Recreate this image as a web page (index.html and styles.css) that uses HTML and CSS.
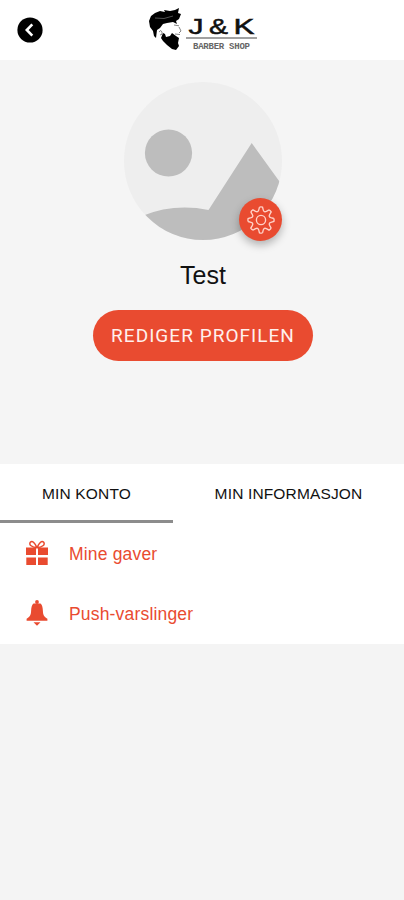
FILE: index.html
```
<!DOCTYPE html>
<html lang="nb">
<head>
<meta charset="utf-8">
<title>J&amp;K Barber Shop</title>
<link rel="stylesheet" href="styles.css">
</head>
<body>
<header class="topbar">
  <button class="back" aria-label="Tilbake">
    <svg viewBox="0 0 26 26" width="26" height="26"><circle cx="13" cy="13" r="12.6"/><path d="M15.3 7.3 9.8 13l5.5 5.7" fill="none" stroke="#fff" stroke-width="2.6"/></svg>
  </button>
  <svg class="logo" viewBox="0 0 112 46" width="112" height="46">
    <path d="M3 20 2 14 4 9 8 6 13 4 18 5 17 3 23 4 28 3 32 1 31 6 34 7 32 12 29 14 30 17 26 15 20 16 16 17 13 21 10 23 9 31 7 29 6 24Z"/>
    <path d="M16 26 18 27 19 30 23 29 25 26 29 29 32 31 31 36 32 39 29 43 25 42 20 38 16 34 14 31Z"/>
    <path d="M8 11Q17 13 26 9" fill="none" stroke="#888" stroke-width=".6"/>
    <path d="M27 18l5 .8M32 20l2 4-2 2M28 27l5 .5M12 25q2-3 3 0t-2 3" fill="none" stroke="#666" stroke-width=".8"/>
    <g class="logo-name">
      <text x="41.5" y="26.5" textLength="15" lengthAdjust="spacingAndGlyphs">J</text>
      <text x="62" y="26.5" textLength="19" lengthAdjust="spacingAndGlyphs">&amp;</text>
      <text x="86.5" y="26.5" textLength="21" lengthAdjust="spacingAndGlyphs">K</text>
    </g>
    <path d="M39 31H110" stroke="#444" stroke-width="1.2"/>
    <text class="logo-sub" x="46" y="41.5" textLength="57">BARBER SHOP</text>
  </svg>
</header>
<main>
  <section class="profile">
    <div class="avatar">
      <svg viewBox="0 0 158 158" width="158" height="158">
        <clipPath id="round"><circle cx="79" cy="79" r="79"/></clipPath>
        <g clip-path="url(#round)">
          <path fill="#eee" d="M0 0h158v158H0z"/>
          <circle cx="44.5" cy="71" r="23.6" fill="#bdbdbd"/>
          <path fill="#bdbdbd" d="M18 134Q50 121 84.5 128L127.7 61 158 103V158H18Z"/>
        </g>
      </svg>
      <button class="settings" aria-label="Innstillinger">
        <svg viewBox="-15 -15 30 30" width="30" height="30">
          <defs><path id="tooth" d="M-1.5-12.9Q0-13.3 1.5-12.9L2.3-9.9Q3.06-7.39 5.37-8.63L8.06-10.18"/></defs>
          <use href="#tooth"/><use href="#tooth" transform="rotate(45)"/><use href="#tooth" transform="rotate(90)"/><use href="#tooth" transform="rotate(135)"/><use href="#tooth" transform="rotate(180)"/><use href="#tooth" transform="rotate(225)"/><use href="#tooth" transform="rotate(270)"/><use href="#tooth" transform="rotate(315)"/>
          <circle r="4.6"/>
        </svg>
      </button>
    </div>
    <h1 class="name">Test</h1>
    <button class="edit">REDIGER PROFILEN</button>
  </section>
  <section class="account">
    <nav class="tabs">
      <a class="tab active">MIN KONTO</a>
      <a class="tab">MIN INFORMASJON</a>
    </nav>
    <ul class="menu">
      <li class="item">
        <svg viewBox="0 0 24 26" width="24" height="26">
          <path d="M1 7.500h10v7.500H1zM13 7.500h10v7.500H13zM1.300 17.500h9.700v7.500H1.300zM13 17.500h9.700v7.500H13z"/>
          <path d="M12 7.600C10 3 7.400.3 5.500 2.100 3.200 4.700 7.200 7.400 12 7.600 16.800 7.400 20.800 4.700 18.500 2.100 16.600.3 14 3 12 7.600Z" fill="none" stroke="#e94b30" stroke-width="1.5"/>
        </svg>
        <span>Mine gaver</span>
      </li>
      <li class="item">
        <svg viewBox="0 0 24 26" width="24" height="26">
          <circle cx="12" cy="2" r="1.9"/>
          <path d="M8.500 3.500h7c1.800 1.600 2.200 4 2.400 7.500.2 4.200 1.200 5.800 4.500 7.700v2.100H1.600v-2.100c3.300-1.900 4.300-3.500 4.500-7.700C6.300 7.500 6.700 5.100 8.500 3.500Z"/>
          <path d="M8.500 22.300h7L12 25.800Z"/>
        </svg>
        <span>Push-varslinger</span>
      </li>
    </ul>
  </section>
</main>
</body>
</html>
```
FILE: styles.css
```
* { box-sizing: border-box; }
body { margin: 0; min-height: 900px; background: #f4f4f4; color: #111; font-family: "Liberation Sans", Arial, sans-serif; }
button { border: 0; padding: 0; font: inherit; }
svg { display: block; flex: none; }
.topbar { display: grid; grid-template-columns: 130px 1fr; height: 60px; padding: 7px 0 0 17px; background: #fff; }
.back { width: 26px; height: 26px; margin-top: 10px; background: none; }
.logo-name { font: 22px "Liberation Sans", sans-serif; fill: #111; stroke: #111; stroke-width: .5px; }
.logo-sub { font: bold 9px "Liberation Sans Narrow", "Liberation Mono", monospace; fill: #666; }
.profile { display: flex; flex-direction: column; align-items: center; height: 404px; padding-top: 22px; background: #f5f5f5; }
.avatar { position: relative; width: 158px; height: 158px; margin-left: 2px; }
.settings { position: absolute; left: 115px; top: 116px; display: grid; place-items: center; width: 43px; height: 43px; border-radius: 50%; background: #e94b30; box-shadow: 0 4px 8px rgba(0, 0, 0, .28); }
.settings svg { fill: none; stroke: #ffd2c8; stroke-width: 1.35; }
.name { margin: 21px 0 20px 2px; font: 25px/29px "Liberation Sans", sans-serif; }
.edit { width: 220px; height: 51px; margin-left: 1px; padding-left: 1px; border-radius: 26px; background: #e94b30; color: #fff0ed; font: 19px/51px Roboto, sans-serif; letter-spacing: 1.03px; white-space: nowrap; }
.account { height: 180px; background: #fff; }
.tabs { display: flex; height: 59px; }
.tab { display: flex; justify-content: center; width: 231px; padding-top: 20px; font-size: 15.5px; line-height: 19px; letter-spacing: .15px; }
.tab.active { width: 173px; border-bottom: 3px solid #8c8c8c; }
.menu { margin: 0; padding: 0; list-style: none; }
.item { display: flex; align-items: center; gap: 20px; height: 60px; padding-left: 25px; color: #e94b30; fill: #e94b30; font-size: 17.5px; letter-spacing: .18px; }
.item span { padding-top: 2px; }
```
